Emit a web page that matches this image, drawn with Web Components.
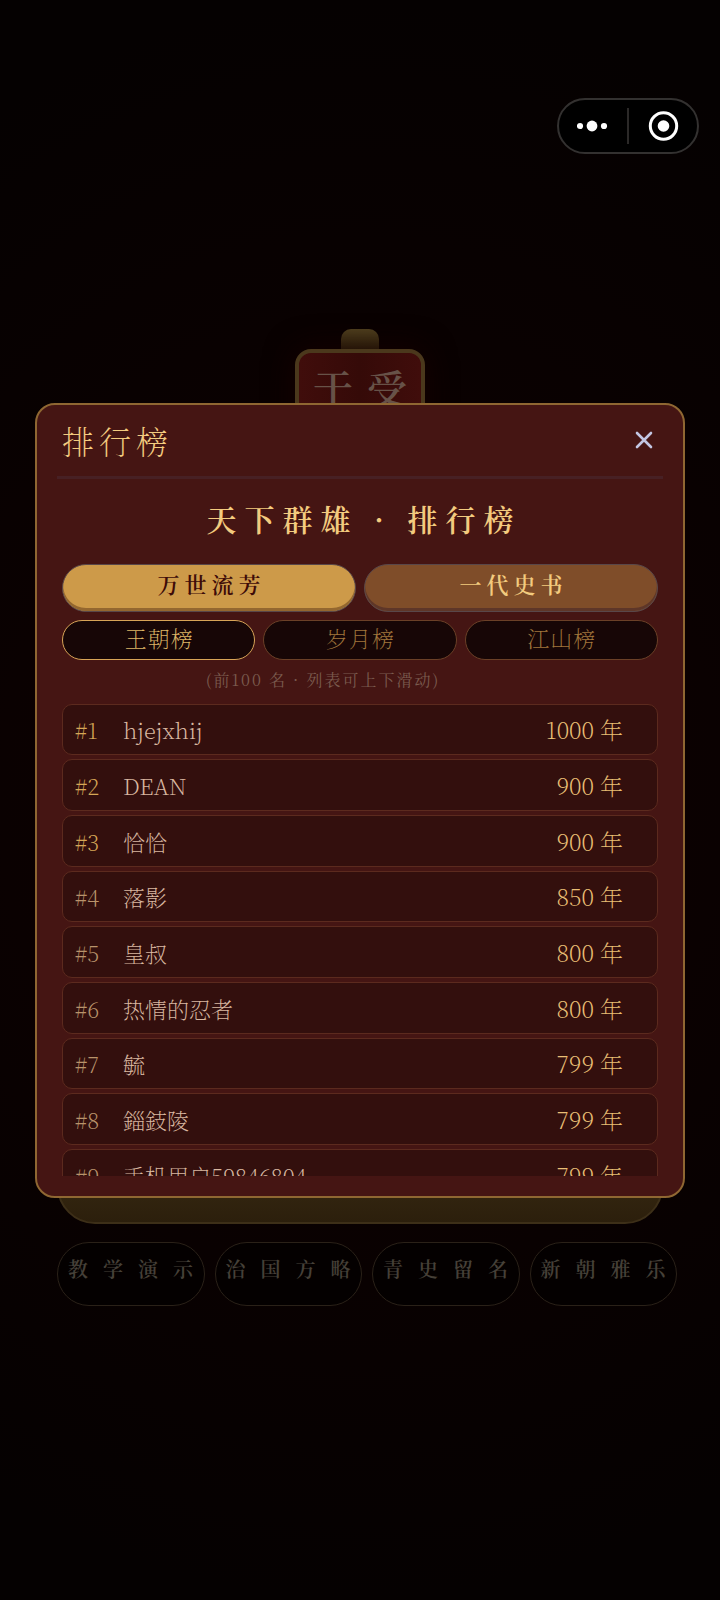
<!DOCTYPE html>
<html lang="zh-CN">
<head>
<meta charset="utf-8">
<meta name="viewport" content="width=device-width, initial-scale=1">
<title>排行榜</title>
<style>
  :root {
    --gold-light: #f3cb7f;
    --gold-dim: #8f6732;
    --panel: #451513;
    --font-cjk: "Noto Serif CJK SC", "Noto Sans CJK SC", sans-serif;
    --font-brush: "KaiTi", "STKaiti", "AR PL UKai CN", "Noto Serif CJK SC", "Noto Sans CJK SC", serif;
  }
  body {
    margin: 0;
    min-height: 100vh;
    background: radial-gradient(ellipse 100% 50% at 50% 50%, #0f0101 0%, #080101 70%, #050101 100%);
    font-family: var(--font-cjk);
    font-weight: 200;
  }
</style>
</head>
<body>
<game-home></game-home>
<mini-capsule></mini-capsule>
<modal-dialog heading="排行榜">
  <rank-board></rank-board>
</modal-dialog>

<script>
'use strict';

/* ── <game-home> : dimmed start screen behind the dialog ── */
class GameHome extends HTMLElement {
  constructor() {
    super();
    this.attachShadow({ mode: 'open' });
  }

  connectedCallback() {
    this.shadowRoot.innerHTML = `
      <style>
        :host {
          display: flex;
          flex-direction: column;
          align-items: center;
          justify-content: center;
          min-height: 100vh;
          box-sizing: border-box;
          padding: 34px 43px 0 57px;
        }
        .knob {
          width: 38px;
          height: 20px;
          margin-right: 14px;
          border-radius: 10px 10px 0 0;
          background: linear-gradient(#51411f, #382a10);
        }
        .seal {
          box-sizing: border-box;
          width: 130px;
          height: 130px;
          margin: 0 14px 651px 0;
          padding-top: 6px;
          border: 4px solid #4b381c;
          border-radius: 16px;
          background: linear-gradient(90deg, #400d0b, #350a08, #400d0b);
          box-shadow: 0 0 30px #160202;
          color: #675248;
          font-family: var(--font-brush);
          font-size: 40px;
          font-weight: 600;
          line-height: 56px;
          letter-spacing: 14px;
          text-indent: 14px;
          text-align: center;
          white-space: nowrap;
        }
        .start {
          align-self: stretch;
          height: 94px;
          margin: 0 14px 18px 0;
          border: 2px solid #3d2f18;
          border-radius: 38px;
          background: linear-gradient(#3f3016, #2c1f0c);
        }
        nav {
          align-self: stretch;
          display: grid;
          grid-template-columns: repeat(4, minmax(0, 1fr));
          gap: 10px;
        }
        nav button {
          height: 64px;
          padding: 0 0 10px 10px;
          border: 1px solid #2a2118;
          border-radius: 32px;
          background: #040000;
          color: #464038;
          font: 600 20px var(--font-brush);
          letter-spacing: 15px;
          text-align: left;
          white-space: nowrap;
        }
      </style>
      <div class="knob"></div>
      <div class="seal">于受</div>
      <button class="start" aria-label="start"></button>
      <nav>
        <button>教学演示</button>
        <button>治国方略</button>
        <button>青史留名</button>
        <button>新朝雅乐</button>
      </nav>
    `;
  }
}

/* ── <mini-capsule> : host app menu, top right ── */
class MiniCapsule extends HTMLElement {
  constructor() {
    super();
    this.attachShadow({ mode: 'open' });
  }

  connectedCallback() {
    this.shadowRoot.innerHTML = `
      <style>
        :host {
          position: absolute;
          top: 98px;
          right: 21px;
          display: flex;
          align-items: center;
          box-sizing: border-box;
          width: 142px;
          height: 56px;
          border: 2px solid #333130;
          border-radius: 28px;
          background: #000;
        }
        button {
          flex: 1;
          height: 52px;
          padding: 0;
          border: 0;
          background: none;
        }
        svg { display: block; margin: auto; }
        i { width: 2px; height: 36px; background: #2b2928; }
      </style>
      <button aria-label="more">
        <svg width="32" height="32" viewBox="0 0 32 32" fill="#fff">
          <circle cx="3" cy="16" r="3.1"/><circle cx="15" cy="16" r="5.4"/><circle cx="27" cy="16" r="3.1"/>
        </svg>
      </button>
      <i></i>
      <button aria-label="close app">
        <svg width="32" height="32" viewBox="0 0 32 32">
          <circle cx="16.5" cy="16" r="13.2" fill="none" stroke="#fff" stroke-width="3"/>
          <circle cx="16.5" cy="16" r="5.8" fill="#fff"/>
        </svg>
      </button>
    `;
  }
}

/* ── <modal-dialog heading="…"> : framed panel, content in the slot ── */
class ModalDialog extends HTMLElement {
  constructor() {
    super();
    this.attachShadow({ mode: 'open' });
  }

  connectedCallback() {
    this.shadowRoot.innerHTML = `
      <style>
        :host {
          position: fixed;
          inset: 0;
          display: flex;
          align-items: center;
          justify-content: center;
          padding: 0 35px;
        }
        section {
          flex: 1;
          box-sizing: border-box;
          padding: 0 20px 20px;
          border: 2px solid var(--gold-dim);
          border-radius: 20px;
          background: var(--panel);
        }
        header {
          display: flex;
          align-items: center;
          justify-content: space-between;
          height: 71px;
          padding: 0 5px;
          border-bottom: 3px solid #472024;
        }
        h1 {
          margin: 0;
          color: var(--gold-light);
          font-size: 32px;
          font-weight: 200;
          line-height: 40px;
          letter-spacing: 5px;
        }
        header button {
          padding: 0 5px;
          border: 0;
          background: none;
          cursor: pointer;
        }
        svg { display: block; }
      </style>
      <section role="dialog" aria-labelledby="title">
        <header>
          <h1 id="title"></h1>
          <button id="btn-close" aria-label="close">
            <svg width="18" height="18" viewBox="0 0 18 18" stroke="#c3c6e2" stroke-width="2.6" stroke-linecap="round">
              <path d="M2 2L16 16M16 2L2 16"/>
            </svg>
          </button>
        </header>
        <slot></slot>
      </section>
    `;
    this.shadowRoot.getElementById('title').textContent = this.getAttribute('heading');
    this.shadowRoot.getElementById('btn-close')
      .addEventListener('click', () => { this.style.display = 'none'; });
  }
}

/* ── <rank-board> : period tabs, board tabs and the scrolling table ── */
const RANKS = [
  ['hjejxhij', 1000],
  ['DEAN', 900],
  ['恰恰', 900],
  ['落影', 850],
  ['皇叔', 800],
  ['热情的忍者', 800],
  ['毓', 799],
  ['錙鈘陵', 799],
  ['手机用户59846804', 799],
];

class RankBoard extends HTMLElement {
  constructor() {
    super();
    this.attachShadow({ mode: 'open' });
  }

  connectedCallback() {
    this._render();
    this.shadowRoot.querySelectorAll('.tabs').forEach(group => {
      group.addEventListener('click', e => {
        if (e.target.tagName !== 'BUTTON') return;
        group.querySelectorAll('button').forEach(b => b.setAttribute('aria-selected', b === e.target));
      });
    });
  }

  _render() {
    const rows = RANKS.map(([name, years], i) => `
      <tr>
        <td class="rank">#${i + 1}</td>
        <td class="name">${name}</td>
        <td class="years">${years} 年</td>
      </tr>`).join('');

    this.shadowRoot.innerHTML = `
      <style>
        :host { display: block; padding: 0 5px; }
        h2 {
          margin: 0;
          padding: 15px 0 22px;
          color: var(--gold-light);
          font-family: var(--font-brush);
          font-size: 30px;
          font-weight: 600;
          line-height: 48px;
          letter-spacing: 8px;
          text-indent: 8px;
          text-align: center;
        }
        .tabs { display: grid; gap: 8px; }
        .tabs button { padding: 0; border-style: solid; cursor: pointer; }

        .period { grid-template-columns: 1fr 1fr; margin-bottom: 8px; }
        .period button {
          height: 48px;
          padding-bottom: 9px;
          border-width: 1px;
          border-color: #594749;
          border-radius: 24px;
          background: #7f4d29;
          box-shadow: inset 0 -3px 0 #5e3628;
          color: var(--gold-light);
          font: 600 22px var(--font-brush);
          letter-spacing: 5px;
          text-indent: 5px;
        }
        .period button[aria-selected="true"] {
          background: #cd9a49;
          box-shadow: inset 0 -3px 0 #94672f;
          color: #3d0b08;
        }

        .board { grid-template-columns: repeat(3, 1fr); }
        .board button {
          height: 40px;
          padding-bottom: 5px;
          border-width: 1px;
          border-color: #6b4027;
          border-radius: 20px;
          background: #170606;
          color: #a1763c;
          font: 200 22px var(--font-cjk);
          letter-spacing: 1px;
          text-indent: 1px;
        }
        .board button[aria-selected="true"] {
          border-color: #d8a457;
          color: #dcb566;
        }

        p {
          margin: 0;
          padding: 8px 76px 12px 0;
          color: #7a5a4e;
          font-family: var(--font-brush);
          font-size: 16px;
          font-weight: 400;
          line-height: 24px;
          letter-spacing: 2px;
          text-indent: 2px;
          text-align: center;
        }

        .scroll { height: 472px; overflow-y: auto; scrollbar-width: none; }
        table { display: block; }
        tbody {
          display: grid;
          grid-auto-rows: 1fr;
          gap: 4px;
          min-height: 497px;
        }
        tr {
          display: grid;
          grid-template-columns: 48px 1fr auto;
          align-items: center;
          padding: 2px 34px 0 12px;
          border: 1px solid #5c2a1e;
          border-radius: 10px;
          background: #330f0d;
          font-size: 22px;
          line-height: 32px;
        }
        td { padding: 0; white-space: nowrap; }
        .rank { color: #b9936b; }
        tr:nth-child(-n+3) .rank { color: #d6a757; }
        .name { color: #d9b7a0; }
        .years { color: #e9bf75; font-size: 23px; }
      </style>

      <h2>天下群雄 · 排行榜</h2>
      <div class="tabs period" role="tablist">
        <button role="tab" aria-selected="true">万世流芳</button>
        <button role="tab" aria-selected="false">一代史书</button>
      </div>
      <div class="tabs board" role="tablist">
        <button role="tab" aria-selected="true">王朝榜</button>
        <button role="tab" aria-selected="false">岁月榜</button>
        <button role="tab" aria-selected="false">江山榜</button>
      </div>
      <p>(前100 名 · 列表可上下滑动)</p>
      <div class="scroll">
        <table><tbody>${rows}</tbody></table>
      </div>
    `;
  }
}

customElements.define('game-home', GameHome);
customElements.define('mini-capsule', MiniCapsule);
customElements.define('modal-dialog', ModalDialog);
customElements.define('rank-board', RankBoard);
</script>
</body>
</html>
